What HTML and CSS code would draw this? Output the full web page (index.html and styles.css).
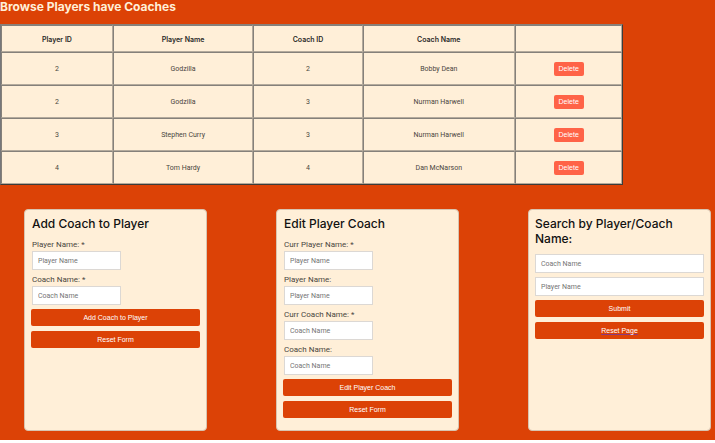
FILE: index.html
```html
<!DOCTYPE html>
<html lang="en">
<head>
<meta charset="utf-8">
<title>Players have Coaches</title>
<link rel="stylesheet" href="styles.css">
</head>
<body>
<main class="page">
  <h1 class="page-title">Browse Players have Coaches</h1>
  <table class="browse">
    <colgroup><col class="col-pid"><col class="col-pname"><col class="col-cid"><col class="col-cname"><col class="col-action"></colgroup>
    <thead>
      <tr><th>Player ID</th><th>Player Name</th><th>Coach ID</th><th>Coach Name</th><th></th></tr>
    </thead>
    <tbody>
      <tr><td>2</td><td>Godzilla</td><td>2</td><td>Bobby Dean</td><td><button class="delete" type="button">Delete</button></td></tr>
      <tr><td>2</td><td>Godzilla</td><td>3</td><td>Nurman Harwell</td><td><button class="delete" type="button">Delete</button></td></tr>
      <tr><td>3</td><td>Stephen Curry</td><td>3</td><td>Nurman Harwell</td><td><button class="delete" type="button">Delete</button></td></tr>
      <tr><td>4</td><td>Tom Hardy</td><td>4</td><td>Dan McNarson</td><td><button class="delete" type="button">Delete</button></td></tr>
    </tbody>
  </table>
  <div class="cards">
    <form class="card">
      <h2 class="card-title">Add Coach to Player</h2>
      <label class="label" for="add-player">Player Name: *</label>
      <input class="field" id="add-player" type="text" placeholder="Player Name">
      <label class="label" for="add-coach">Coach Name: *</label>
      <input class="field" id="add-coach" type="text" placeholder="Coach Name">
      <button class="action" type="submit">Add Coach to Player</button>
      <button class="action" type="reset">Reset Form</button>
    </form>
    <form class="card">
      <h2 class="card-title">Edit Player Coach</h2>
      <label class="label" for="curr-player">Curr Player Name: *</label>
      <input class="field" id="curr-player" type="text" placeholder="Player Name">
      <label class="label" for="new-player">Player Name:</label>
      <input class="field" id="new-player" type="text" placeholder="Player Name">
      <label class="label" for="curr-coach">Curr Coach Name: *</label>
      <input class="field" id="curr-coach" type="text" placeholder="Coach Name">
      <label class="label" for="new-coach">Coach Name:</label>
      <input class="field" id="new-coach" type="text" placeholder="Coach Name">
      <button class="action" type="submit">Edit Player Coach</button>
      <button class="action" type="reset">Reset Form</button>
    </form>
    <form class="card search">
      <h2 class="card-title">Search by Player/Coach Name:</h2>
      <input class="field" type="text" placeholder="Coach Name" aria-label="Coach Name">
      <input class="field" type="text" placeholder="Player Name" aria-label="Player Name">
      <button class="action" type="submit">Submit</button>
      <a class="action" href="#">Reset Page</a>
    </form>
  </div>
</main>
</body>
</html>
```

FILE: styles.css
```css
* {
  box-sizing: border-box;
}

body {
  margin: 0;
  background: #fff;
  color: #4a4640;
  font-family: Roboto, "Liberation Sans", sans-serif;
}

.page {
  padding-bottom: 9px;
  background: #dc4206;
}

.page-title {
  margin: 0;
  padding-bottom: 11px;
  color: #ffefd8;
  font-family: Inter, sans-serif;
  font-size: 12px;
  font-weight: 700;
  line-height: 13px;
}

.browse {
  width: 87.2%;
  table-layout: fixed;
  border: 1px solid;
  border-color: #8a8078 #3c3c3a #3c3c3a #77777a;
  border-spacing: 0;
  background: #ffefd8;
  font-size: 7px;
  text-align: center;
}

.col-pid { width: 18%; }
.col-pname { width: 22.6%; }
.col-cid { width: 17.6%; }
.col-cname { width: 24.5%; }
.col-action { width: 17.3%; }

.browse th,
.browse td {
  height: 33px;
  padding: 0;
  border: 1px solid;
  border-color: #85807a #b4aa9c #b4aa9c #85807a;
}

.browse th {
  height: 27px;
  padding-top: 1px;
  color: #2b2a28;
  font-family: Inter, sans-serif;
  font-weight: 600;
}

.delete {
  width: 30px;
  height: 14px;
  padding: 0;
  border: 0;
  border-radius: 2px;
  background: #ff6347;
  color: #fff;
  font: 7px "Liberation Sans", sans-serif;
}

.cards {
  display: grid;
  grid-template-columns: repeat(3, 1fr);
  gap: 69px;
  padding: 24px 4px 0 24px;
}

.card {
  display: flex;
  flex-direction: column;
  align-items: flex-start;
  min-width: 0;
  padding: 6px 6px 12px;
  border: 1px solid #d8c4b0;
  border-radius: 4px;
  background: #ffefd8;
}

.card-title {
  margin: 0 0 8px 1px;
  color: #111;
  font-family: Inter, sans-serif;
  font-size: 12px;
  font-weight: 500;
  line-height: 15px;
}

.label {
  margin: 0 0 1px 1px;
  font-size: 8px;
  line-height: 11px;
}

.field {
  width: 89px;
  height: 19px;
  margin: 0 0 4px 1px;
  padding: 0 5px;
  border: 1px solid #dcd8d4;
  background: #fff;
  color: #3d3a35;
  font: 7px Roboto, sans-serif;
}

.field::placeholder {
  color: #757575;
}

.action {
  width: 100%;
  height: 17px;
  margin-bottom: 5px;
  padding: 0;
  border: 0;
  border-radius: 2px;
  background: #dc4206;
  color: #fff;
  font: 7px/17px "Liberation Sans", sans-serif;
  text-align: center;
}

a.action {
  text-decoration-color: #8a3a80;
}

.action:last-child {
  margin-bottom: 0;
}

.search .card-title,
.search .field {
  margin-left: 0;
}

.search .field {
  width: 100%;
}
```
